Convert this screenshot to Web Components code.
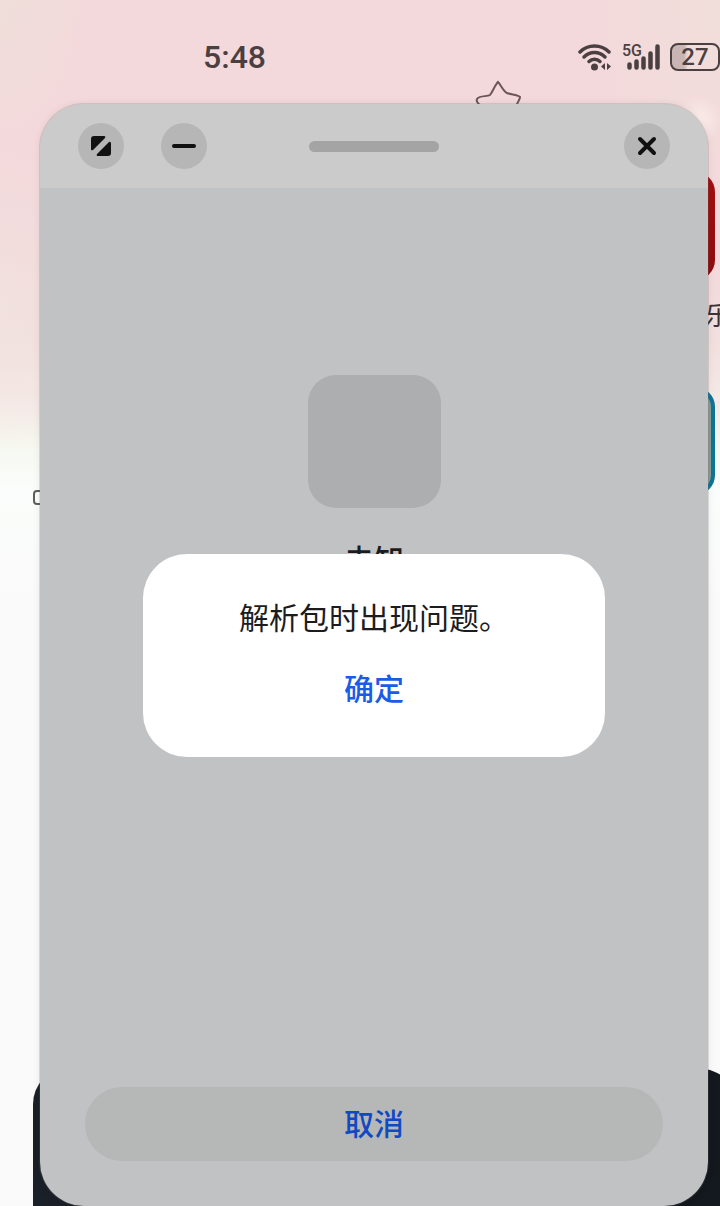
<!DOCTYPE html>
<html lang="zh-CN">
<head>
<meta charset="UTF-8">
<meta name="viewport" content="width=device-width, initial-scale=1">
<title>解析包时出现问题</title>
<style>
  :root {
    --font-sans: "Noto Sans CJK SC", "Noto Sans", sans-serif;
    --font-status: Roboto, "Liberation Sans", sans-serif;
    --color-status: #4a4041;
    --color-text: #1c1c1e;
    --color-accent: #1b5ce4;
    --color-accent-dim: #1149c2;
    --color-surface: #c0c2c4;
    --color-bar: #cbcbcb;
    --text-md: 30px;
    --leading-md: 40px;
  }

  body {
    margin: 0;
    font-family: var(--font-sans);
    color: var(--color-text);
  }
</style>
</head>
<body>
<phone-screen>
  <home-screen slot="home">
    <app-tile color="red">乐</app-tile>
    <app-tile color="blue"></app-tile>
  </home-screen>
  <status-bar slot="status" time="5:48" network="5G" battery="27"></status-bar>
  <floating-window>
    <package-info>未知</package-info>
    <pill-button slot="footer">取消</pill-button>
    <alert-dialog slot="dialog" action="确定">解析包时出现问题。</alert-dialog>
  </floating-window>
</phone-screen>

<script>
/**
 * Phone screen: home screen behind, status bar and window on top
 */
class PhoneScreen extends HTMLElement {
  constructor() {
    super();
    this.attachShadow({ mode: 'open' });
  }

  connectedCallback() {
    this.shadowRoot.innerHTML = `
      <style>
        :host {
          display: flex;
          flex-direction: column;
          position: relative;
          min-height: 100vh;
          overflow: hidden;
        }

        main {
          flex: 1;
          display: flex;
          position: relative;
          padding: 0 12px 0 40px;
        }
      </style>

      <slot name="home"></slot>
      <slot name="status"></slot>
      <main><slot></slot></main>
    `;
  }
}

/**
 * Home screen: wallpaper, doodles, app tiles and dock
 */
class HomeScreen extends HTMLElement {
  constructor() {
    super();
    this.attachShadow({ mode: 'open' });
  }

  connectedCallback() {
    this.shadowRoot.innerHTML = `
      <style>
        :host {
          display: block;
          position: absolute;
          inset: 0;
          overflow: hidden;
          background:
            radial-gradient(circle at 698px 120px, rgba(253, 245, 242, 0.7) 0, transparent 24px),
            radial-gradient(ellipse at 0 0, rgba(236, 226, 216, 0.6) 0, transparent 80px),
            radial-gradient(ellipse at 0 300px, rgba(240, 228, 224, 0.6) 0, transparent 120px),
            radial-gradient(ellipse at 100% 0, rgba(240, 226, 218, 0.6) 0, transparent 120px),
            linear-gradient(#f3d9db 0, #f4d9dc 260px, #f2dfde 340px, #f5ebe8 410px, #f6f9f1 450px, #fafdfb 490px, #fafafa 600px);
        }

        .apps {
          display: flex;
          flex-direction: column;
          align-items: flex-end;
          padding: 172px 5px 0 0;
        }

        .doodle {
          position: absolute;
          fill: none;
          stroke: #6b565a;
          stroke-width: 2;
        }

        .star {
          left: 474px;
          top: 80px;
        }

        .mark {
          left: 32px;
          top: 488px;
          stroke: #5c5f5c;
        }

        .dock {
          position: absolute;
          left: 33px;
          right: -24px;
          bottom: 0;
          height: 138px;
          border-radius: 36px 48px 0 0;
          background: linear-gradient(90deg, #1b2028, #13181e);
        }
      </style>

      <svg class="doodle star" width="48" height="28" viewBox="0 0 48 28" aria-hidden="true">
        <path d="M9 27C4 24 2 21 3 19C6 15 13 17 16 15C19 11 21 5 24 2C27 5 29 11 33 13C37 15 43 14 46 17C46 20 43 22 42 27"/>
      </svg>
      <svg class="doodle mark" width="14" height="18" viewBox="0 0 14 18" aria-hidden="true">
        <rect x="2" y="3" width="16" height="13" rx="3"/>
      </svg>
      <div class="apps"><slot></slot></div>
      <div class="dock"></div>
    `;
  }
}

/**
 * App tile with its label
 * Colors: red, blue
 */
class AppTile extends HTMLElement {
  constructor() {
    super();
    this.attachShadow({ mode: 'open' });
  }

  connectedCallback() {
    const color = this.getAttribute('color') || 'red';

    this.shadowRoot.innerHTML = `
      <style>
        :host {
          display: flex;
          flex-direction: column;
          align-items: flex-end;
          height: 215px;
        }

        .icon {
          width: 108px;
          height: 108px;
          border-radius: 20px;
          box-sizing: border-box;
        }

        .red {
          background: linear-gradient(#a5100f, #8d0e12);
        }

        .blue {
          background: #8a9a96;
          border: 4px solid #0f7595;
        }

        .label {
          margin: 14px -16px 0 0;
          font-size: 26px;
          line-height: 40px;
          color: #3c3435;
        }
      </style>

      <div class="icon ${color}"></div>
      <div class="label"><slot></slot></div>
    `;
  }
}

/**
 * Status bar: time, wifi, mobile signal, battery
 */
class StatusBar extends HTMLElement {
  constructor() {
    super();
    this.attachShadow({ mode: 'open' });
  }

  connectedCallback() {
    this.shadowRoot.innerHTML = `
      <style>
        :host {
          display: flex;
          align-items: center;
          justify-content: space-between;
          position: relative;
          box-sizing: border-box;
          height: 104px;
          padding: 10px 0 0 203px;
          font-family: var(--font-status);
          font-weight: 500;
          color: var(--color-status);
        }

        time {
          font-size: 32px;
          line-height: 40px;
        }

        .icons {
          display: flex;
          align-items: center;
          gap: 10px;
        }

        svg {
          display: block;
        }

        .signal {
          display: grid;
        }

        .signal > * {
          grid-area: 1 / 1;
        }

        .signal svg {
          justify-self: end;
        }

        .network {
          width: 38px;
          font-size: 16px;
          line-height: 16px;
        }

        .battery {
          box-sizing: border-box;
          width: 50px;
          height: 28px;
          border: 2px solid currentColor;
          border-radius: 8px;
          background: linear-gradient(90deg, rgba(74, 64, 65, 0.25) 12px, transparent 16px);
          font-size: 24px;
          line-height: 24px;
          text-align: center;
        }
      </style>

      <time>${this.getAttribute('time')}</time>
      <div class="icons">
        <svg width="34" height="28" viewBox="0 0 34 28" aria-label="WLAN" role="img">
          <g fill="none" stroke="currentColor" stroke-width="3.5" stroke-linecap="round">
            <path d="M2 9C10 1 23 1 31 9"/>
            <path d="M6 14C12 8 21 8 27 14"/>
            <path d="M11 18.5C14 15.5 19 15.5 22 18.5"/>
          </g>
          <circle cx="16.5" cy="24" r="3.5" fill="currentColor"/>
          <path d="M27 20V27L23 23.5ZM29 20V27L33 23.5Z" fill="currentColor"/>
        </svg>
        <div class="signal">
          <span class="network">${this.getAttribute('network')}</span>
          <svg width="33" height="28" viewBox="0 0 33 28" aria-hidden="true">
            <path d="M2.5 21.5V24.5M9.5 18.5V24.5M16.5 15.5V24.5M23.5 10.5V24.5M30.5 3.5V24.5" fill="none" stroke="currentColor" stroke-width="4.5" stroke-linecap="round"/>
          </svg>
        </div>
        <div class="battery">${this.getAttribute('battery')}</div>
      </div>
    `;
  }
}

/**
 * Floating window with its title bar controls
 */
class FloatingWindow extends HTMLElement {
  constructor() {
    super();
    this.attachShadow({ mode: 'open' });
  }

  connectedCallback() {
    this.shadowRoot.innerHTML = `
      <style>
        :host {
          flex: 1;
          display: flex;
          flex-direction: column;
          position: relative;
          overflow: hidden;
          border-radius: 44px;
          background: var(--color-surface);
          box-shadow: 0 0 0 1px rgba(120, 110, 110, 0.2), 0 0 8px rgba(0, 0, 0, 0.08);
        }

        header {
          display: grid;
          grid-template-columns: 1fr auto 1fr;
          align-items: center;
          height: 84px;
          padding: 0 38px;
          background: var(--color-bar);
        }

        .left {
          display: flex;
          gap: 37px;
        }

        button {
          display: grid;
          place-items: center;
          width: 46px;
          height: 46px;
          padding: 0;
          border: 0;
          border-radius: 50%;
          background: #b6b6b6;
          color: #111;
          cursor: pointer;
        }

        .close {
          justify-self: end;
        }

        .handle {
          width: 130px;
          height: 11px;
          border-radius: 6px;
          background: #a4a4a4;
        }

        .body {
          flex: 1;
        }

        footer {
          padding: 0 45px 45px;
        }

        .overlay {
          position: absolute;
          inset: 0;
          display: grid;
          place-items: center;
        }
      </style>

      <header>
        <div class="left">
          <button type="button" aria-label="全屏">
            <svg width="22" height="22" viewBox="0 0 22 22" fill="currentColor">
              <path d="M4 1H14Q16 1 15 3L3 15Q1 16 1 14V4Q1 1 4 1ZM21 9V18Q21 21 18 21H8Q6 21 7 19L19 7Q21 6 21 9Z"/>
            </svg>
          </button>
          <button type="button" aria-label="最小化">
            <svg width="24" height="22" viewBox="0 0 24 22" fill="none" stroke="currentColor" stroke-width="4" stroke-linecap="round">
              <path d="M2 11H22"/>
            </svg>
          </button>
        </div>
        <div class="handle"></div>
        <button type="button" class="close" aria-label="关闭">
          <svg width="20" height="20" viewBox="0 0 20 20" fill="none" stroke="currentColor" stroke-width="4" stroke-linecap="round">
            <path d="M3 3L17 17M17 3L3 17"/>
          </svg>
        </button>
      </header>
      <div class="body"><slot></slot></div>
      <footer><slot name="footer"></slot></footer>
      <div class="overlay"><slot name="dialog"></slot></div>
    `;
  }
}

/**
 * Package icon placeholder and name
 */
class PackageInfo extends HTMLElement {
  constructor() {
    super();
    this.attachShadow({ mode: 'open' });
  }

  connectedCallback() {
    this.shadowRoot.innerHTML = `
      <style>
        :host {
          display: flex;
          flex-direction: column;
          align-items: center;
          gap: 30px;
          padding-top: 187px;
          font-size: var(--text-md);
          line-height: var(--leading-md);
          font-weight: 500;
        }

        .icon {
          width: 133px;
          height: 133px;
          border-radius: 28px;
          background: #adaeb0;
        }
      </style>

      <div class="icon"></div>
      <div><slot></slot></div>
    `;
  }
}

class PillButton extends HTMLElement {
  constructor() {
    super();
    this.attachShadow({ mode: 'open' });
  }

  connectedCallback() {
    this.shadowRoot.innerHTML = `
      <style>
        :host {
          display: block;
        }

        button {
          display: block;
          width: 100%;
          height: 74px;
          padding: 0 0 4px;
          border: 0;
          border-radius: 37px;
          background: #b6b8b8;
          color: var(--color-accent-dim);
          font: inherit;
          font-size: var(--text-md);
          line-height: var(--leading-md);
          font-weight: 500;
          cursor: pointer;
        }
      </style>

      <button type="button"><slot></slot></button>
    `;
  }
}

/**
 * Alert dialog: message and one action
 */
class AlertDialog extends HTMLElement {
  constructor() {
    super();
    this.attachShadow({ mode: 'open' });
  }

  connectedCallback() {
    this.shadowRoot.innerHTML = `
      <style>
        :host {
          display: flex;
          flex-direction: column;
          align-items: center;
          gap: 31px;
          box-sizing: border-box;
          width: 462px;
          max-width: 90%;
          padding: 42px 24px 50px;
          border-radius: 44px;
          background: #fff;
          font-size: var(--text-md);
          line-height: var(--leading-md);
        }

        p {
          margin: 0;
        }

        button {
          padding: 0 24px;
          border: 0;
          background: none;
          color: var(--color-accent);
          font: inherit;
          font-weight: 500;
          cursor: pointer;
        }
      </style>

      <p><slot></slot></p>
      <button type="button">${this.getAttribute('action')}</button>
    `;
  }
}

customElements.define('phone-screen', PhoneScreen);
customElements.define('home-screen', HomeScreen);
customElements.define('app-tile', AppTile);
customElements.define('status-bar', StatusBar);
customElements.define('floating-window', FloatingWindow);
customElements.define('package-info', PackageInfo);
customElements.define('pill-button', PillButton);
customElements.define('alert-dialog', AlertDialog);
</script>
</body>
</html>
